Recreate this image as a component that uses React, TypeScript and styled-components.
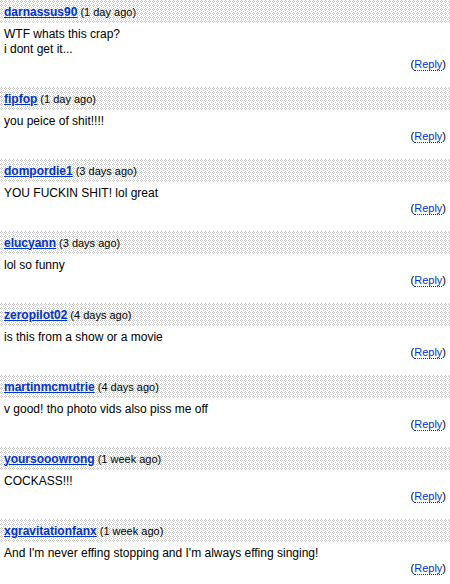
import React from "react";
import styled, { createGlobalStyle } from "styled-components";

const Global = createGlobalStyle`
  html, body { margin: 0; padding: 0; background: #fff; }
  body { font-family: Arial, "Liberation Sans", Helvetica, sans-serif; }
`;

const dots =
  "url(\"data:image/svg+xml,%3Csvg xmlns='http://www.w3.org/2000/svg' width='4' height='4' shape-rendering='crispEdges'%3E%3Crect width='4' height='4' fill='%23ffffff'/%3E%3Cg fill='%23c8c8c8'%3E%3Crect x='1' y='0' width='1' height='1'/%3E%3Crect x='0' y='1' width='1' height='1'/%3E%3Crect x='2' y='1' width='1' height='1'/%3E%3Crect x='1' y='2' width='1' height='1'/%3E%3Crect x='3' y='3' width='1' height='1'/%3E%3C/g%3E%3C/svg%3E\")";

const List = styled.div`
  width: 450px;
  display: flex;
  flex-direction: column;
`;

const Comment = styled.div`
  display: flex;
  flex-direction: column;
  padding-bottom: 15px;
`;

const Header = styled.div`
  height: 23px;
  display: flex;
  align-items: center;
  padding-left: 4px;
  background-color: #ececec;
  background-image: ${dots};
  background-size: 4px 4px;
  background-repeat: repeat;
  font-size: 11px;
  color: #000;
`;

const User = styled.a`
  font-weight: bold;
  font-size: 12px;
  color: #0033cc;
  text-decoration: underline;
  margin-right: 3px;
`;

const Body = styled.div`
  padding: 4px 4px 0 4px;
  font-size: 12px;
  line-height: 15px;
  color: #000;
`;

const ReplyRow = styled.div`
  display: flex;
  justify-content: flex-end;
  padding-right: 4px;
  font-size: 11px;
  line-height: 15px;
  color: #000;
`;

const ReplyLink = styled.a`
  color: #0033cc;
  text-decoration: none;
  border-bottom: 1px dotted #0033cc;
  line-height: 12px;
`;

const data: { user: string; ago: string; lines: string[] }[] = [
  { user: "darnassus90", ago: "1 day ago", lines: ["WTF whats this crap?", "i dont get it..."] },
  { user: "fipfop", ago: "1 day ago", lines: ["you peice of shit!!!!"] },
  { user: "dompordie1", ago: "3 days ago", lines: ["YOU FUCKIN SHIT! lol great"] },
  { user: "elucyann", ago: "3 days ago", lines: ["lol so funny"] },
  { user: "zeropilot02", ago: "4 days ago", lines: ["is this from a show or a movie"] },
  { user: "martinmcmutrie", ago: "4 days ago", lines: ["v good! tho photo vids also piss me off"] },
  { user: "yoursooowrong", ago: "1 week ago", lines: ["COCKASS!!!"] },
  { user: "xgravitationfanx", ago: "1 week ago", lines: ["And I'm never effing stopping and I'm always effing singing!"] },
];

export default function App() {
  return (
    <>
      <Global />
      <List>
        {data.map((c) => (
          <Comment key={c.user}>
            <Header>
              <User href="#">{c.user}</User>
              <span>({c.ago})</span>
            </Header>
            <Body>
              {c.lines.map((l, i) => (
                <div key={i}>{l}</div>
              ))}
            </Body>
            <ReplyRow>
              <span>
                (<ReplyLink href="#">Reply</ReplyLink>)
              </span>
            </ReplyRow>
          </Comment>
        ))}
      </List>
    </>
  );
}
